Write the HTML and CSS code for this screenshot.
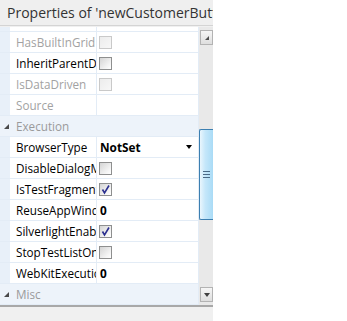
FILE: index.html
```html
<!DOCTYPE html>
<html>
<head>
<meta charset="utf-8">
<link rel="stylesheet" href="styles.css">
</head>
<body>
<div class="panel">
  <div class="title">Properties of 'newCustomerButton'</div>
  <div class="body">
    <div class="grid">
      <div class="row partial"><div class="gut"></div><div class="lbl"></div><div class="val"></div></div>
      <div class="row"><div class="gut"></div><div class="lbl dis">HasBuiltInGrid</div><div class="val"><span class="cb dis"></span></div></div>
      <div class="row"><div class="gut"></div><div class="lbl">InheritParentDataSource</div><div class="val"><span class="cb"></span></div></div>
      <div class="row"><div class="gut"></div><div class="lbl dis">IsDataDriven</div><div class="val"><span class="cb dis"></span></div></div>
      <div class="row"><div class="gut"></div><div class="lbl dis">Source</div><div class="val"></div></div>
      <div class="row cat"><span class="tri"></span><span class="cat-name">Execution</span></div>
      <div class="row"><div class="gut"></div><div class="lbl">BrowserType</div><div class="val"><b>NotSet</b><span class="drop"></span></div></div>
      <div class="row"><div class="gut"></div><div class="lbl">DisableDialogMonitoring</div><div class="val"><span class="cb"></span></div></div>
      <div class="row"><div class="gut"></div><div class="lbl">IsTestFragment</div><div class="val"><span class="cb on"><svg viewBox="0 0 11 11" width="11" height="11"><path d="M2.5 5.5 L4.5 9 L9 1.5" fill="none" stroke="#2b2f8f" stroke-width="1.6"/></svg></span></div></div>
      <div class="row"><div class="gut"></div><div class="lbl">ReuseAppWindow</div><div class="val"><b>0</b></div></div>
      <div class="row"><div class="gut"></div><div class="lbl">SilverlightEnabled</div><div class="val"><span class="cb on"><svg viewBox="0 0 11 11" width="11" height="11"><path d="M2.5 5.5 L4.5 9 L9 1.5" fill="none" stroke="#2b2f8f" stroke-width="1.6"/></svg></span></div></div>
      <div class="row"><div class="gut"></div><div class="lbl">StopTestListOnFailure</div><div class="val"><span class="cb"></span></div></div>
      <div class="row"><div class="gut"></div><div class="lbl">WebKitExecutionDelay</div><div class="val"><b>0</b></div></div>
      <div class="row cat"><span class="tri"></span><span class="cat-name">Misc</span></div>
    </div>
    <div class="scroll">
      <div class="sbtn up"><span class="arr-up"></span></div>
      <div class="track">
        <div class="thumb"><span class="grip"></span></div>
      </div>
      <div class="sbtn down"><span class="arr-down"></span></div>
    </div>
  </div>
  <div class="foot"></div>
</div>
</body>
</html>
```
FILE: styles.css
```css
html, body {
  margin: 0;
  padding: 0;
  background: #ffffff;
}
body {
  width: 347px;
  height: 321px;
  overflow: hidden;
  font-family: "Open Sans", "Noto Sans", sans-serif;
}
.panel {
  width: 213px;
  height: 321px;
  background: #f0f0f0;
  overflow: hidden;
}
.title {
  height: 26px;
  box-sizing: border-box;
  padding-left: 7px;
  line-height: 25px;
  font-size: 14px;
  color: #333333;
  white-space: nowrap;
  overflow: hidden;
  border-bottom: 1px solid #d4d4d4;
  background: #efefef;
}
.body {
  display: flex;
  height: 278px;
  padding-top: 1px;
}
.grid {
  width: 198px;
  border-right: 1px solid #e3ecf6;
  background: #ffffff;
  overflow: hidden;
}
.row {
  display: flex;
  height: 20px;
  border-bottom: 1px solid #e3ecf6;
  font-size: 11.7px;
  line-height: 20px;
  flex: none;
}
.row.partial {
  height: 4px;
}
.gut {
  width: 10px;
  flex: none;
  background: #e8f0f9;
}
.lbl {
  width: 80px;
  flex: none;
  padding-left: 6px;
  white-space: nowrap;
  overflow: hidden;
  color: #000;
  border-right: 1px solid #e3ecf6;
}
.lbl.dis {
  color: #a2a2a2;
}
.val {
  flex: 1;
  display: flex;
  align-items: center;
  padding-left: 2px;
  padding-right: 6px;
}
.val b {
  font-weight: 700;
  padding-left: 1px;
  font-size: 11.8px;
}
.drop {
  margin-left: auto;
  width: 0;
  height: 0;
  border-left: 3.5px solid transparent;
  border-right: 3.5px solid transparent;
  border-top: 4px solid #000;
}
.cb {
  width: 11px;
  height: 11px;
  border: 1px solid #8e8f8f;
  background: linear-gradient(135deg, #d4d4d4 0%, #f4f4f4 70%, #ffffff 100%);
  display: block;
}
.cb.dis {
  border-color: #c9c9c9;
  background: linear-gradient(135deg, #ececec 0%, #f7f7f7 100%);
}
.cb svg {
  display: block;
}
.row.cat {
  background: #edf3fa;
  align-items: center;
  color: #9a9a9a;
}
.tri {
  width: 0;
  height: 0;
  margin-left: 4px;
  margin-right: 7px;
  border-left: 5px solid transparent;
  border-bottom: 5px solid #4a4a4a;
}
.cat-name {
  font-size: 11.7px;
}
.scroll {
  width: 14px;
  flex: none;
  background: #e9e9e9;
  display: flex;
  flex-direction: column;
  align-items: flex-end;
  padding-top: 3px;
  box-sizing: border-box;
}
.sbtn {
  width: 13px;
  height: 15px;
  box-sizing: border-box;
  border: 1px solid #b3b3b3;
  background: linear-gradient(180deg, #f6f6f6, #dedede);
  display: flex;
  align-items: center;
  justify-content: center;
  flex: none;
}
.arr-up {
  width: 0;
  height: 0;
  border-left: 4px solid transparent;
  border-bottom: 4px solid #505050;
}
.arr-down {
  width: 0;
  height: 0;
  border-left: 3px solid transparent;
  border-right: 3px solid transparent;
  border-top: 4px solid #404040;
}
.track {
  flex: 1;
  width: 14px;
  padding-top: 84px;
  box-sizing: border-box;
}
.thumb {
  width: 14px;
  height: 91px;
  box-sizing: border-box;
  border: 1px solid #3c7fb1;
  border-right: none;
  border-radius: 2px 0 0 2px;
  background: linear-gradient(90deg, #eaf6fd 0%, #c5e7fa 40%, #a9dbf6 100%);
  display: flex;
  align-items: center;
  justify-content: center;
}
.grip {
  width: 7px;
  height: 7px;
  background: repeating-linear-gradient(180deg, #4a6a86 0 1px, transparent 1px 3px);
}
.down {
  margin-bottom: 3px;
}
.foot {
  border-top: 2px solid #a8a8a8;
  height: 14px;
}
```
